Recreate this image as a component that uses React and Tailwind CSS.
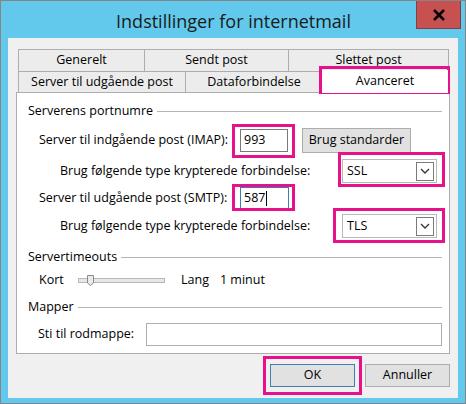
import { useState } from "react";

const PINK = "border-[#e8118c]";

function Mark({ inset, children, className = "" }) {
  // pink annotation frame drawn over an element
  return (
    <span className={`relative inline-flex ${className}`}>
      {children}
      <span
        className={`pointer-events-none absolute border-[3px] ${PINK}`}
        style={inset}
      />
    </span>
  );
}

function Heading({ children }) {
  return (
    <div className="flex items-center h-[20px] pl-[11px] pr-[7px]">
      <span className="pr-[4px]">{children}</span>
      <span className="flex-1 h-px bg-[#b4b4b4]" />
    </div>
  );
}

function Select({ value }) {
  return (
    <div className="flex items-center w-[95px] h-[24px] border border-[#b9b9b9] bg-white pl-[4px] pr-[2px]">
      <span className="flex-1">{value}</span>
      <span className="flex items-center justify-center w-[18px] h-[19px] border border-[#7a7a7a]">
        <svg width="10" height="6" viewBox="0 0 10 6">
          <path d="M1 1 L5 5 L9 1" fill="none" stroke="#333" strokeWidth="1.3" />
        </svg>
      </span>
    </div>
  );
}

export default function App() {
  const [path, setPath] = useState("");
  const tabs1 = [
    ["Generelt", "w-[127px]"],
    ["Sendt post", "w-[145px]"],
    ["Slettet post", "w-[161px]"],
  ];

  return (
    <div
      className="w-[466px] h-[404px] bg-[#62c9ec] border border-[#858585] flex flex-col text-[12.5px] text-black"
      style={{ fontFamily: '"Open Sans", "Noto Sans", sans-serif' }}
    >
      {/* title bar */}
      <div className="relative h-[37px] flex items-center justify-center">
        <span className="text-[18px] text-[#1a1a1a] pt-[4px] pl-[1px]">Indstillinger for internetmail</span>
        <button className="absolute right-[4px] top-0 w-[45px] h-[28px] bg-[#c75050] border border-[#7b4343] border-t-0 flex items-center justify-center">
          <svg width="14" height="12" viewBox="0 0 14 12">
            <path d="M2 1 L12 11 M12 1 L2 11" stroke="#000" strokeWidth="2.6" />
          </svg>
        </button>
      </div>

      {/* client area */}
      <div className="ml-[7px] mr-[7px] h-[360px] bg-[#f0f0f0] pt-[11px] pl-[8px] pr-[8px] flex flex-col">
        {/* tabs */}
        <div className="pl-[2px] flex flex-col">
          <div className="flex h-[22px]">
            {tabs1.map(([t, w], i) => (
              <div
                key={t}
                className={`${w} ${i ? "-ml-px" : ""} h-full border border-b-0 border-[#adadad] bg-[#ececec] flex items-center justify-center`}
              >
                {t}
              </div>
            ))}
          </div>
          <div className="flex h-[21px]">
            <div className="w-[168px] h-full border border-b-0 border-[#adadad] bg-[#ececec] flex items-center justify-center">
              Server til udgående post
            </div>
            <div className="-ml-px w-[138px] h-full border border-b-0 border-[#adadad] bg-[#ececec] flex items-center justify-center">
              Dataforbindelse
            </div>
            <Mark inset={{ left: -3, right: -2, top: -4, bottom: -2 }} className="-ml-[1px] -mt-[1px]">
              <div className="w-[126px] h-[23px] bg-white flex items-center justify-center z-10">
                Avanceret
              </div>
            </Mark>
          </div>
        </div>

        {/* panel */}
        <div className="h-[262px] border border-[#adadad] bg-white flex flex-col pt-[8px]">
          <Heading>Serverens portnumre</Heading>

          <div className="mt-[7px] flex items-center h-[24px] pl-[22px]">
            <span className="w-[201px]">Server til indgående post (IMAP):</span>
            <Mark inset={{ left: -8, right: -7, top: -5, bottom: -6 }}>
              <div className="w-[48px] h-[23px] border border-[#7a7a7a] bg-white flex items-center pl-[3px]">
                993
              </div>
            </Mark>
            <button className="ml-[14px] w-[109px] h-[25px] border border-[#adadad] bg-[#e1e1e1]">
              Brug standarder
            </button>
          </div>

          <div className="mt-[7px] flex items-center h-[24px] pl-[43px]">
            <span className="w-[282px]">Brug følgende type krypterede forbindelse:</span>
            <Mark inset={{ left: -4, right: -8, top: -7, bottom: -4 }}>
              <Select value="SSL" />
            </Mark>
          </div>

          <div className="mt-[3px] flex items-center h-[24px] pl-[22px]">
            <span className="w-[201px]">Server til udgående post (SMTP):</span>
            <Mark inset={{ left: -8, right: -6, top: -3, bottom: -2 }}>
              <div className="w-[49px] h-[22px] border border-[#3c7fb1] bg-white flex items-center pl-[3px]">
                587<span className="w-px h-[15px] bg-black ml-px" />
              </div>
            </Mark>
          </div>

          <div className="mt-[4px] flex items-center h-[24px] pl-[43px]">
            <span className="w-[282px]">Brug følgende type krypterede forbindelse:</span>
            <Mark inset={{ left: -9, right: -8, top: -6, bottom: -5 }}>
              <Select value="TLS" />
            </Mark>
          </div>

          <div className="mt-[9px]">
            <Heading>Servertimeouts</Heading>
          </div>

          <div className="mt-[3px] flex items-center h-[20px] pl-[22px]">
            <span className="w-[39px]">Kort</span>
            <div className="relative w-[87px] h-[5px] border border-[#b8b8b8] bg-[#e7e7e7]">
              <svg className="absolute left-[8px] -top-[4px]" width="7" height="11" viewBox="0 0 7 11">
                <path d="M0.5 0.5 H6.5 V8 L3.5 10.5 L0.5 8 Z" fill="#eaeaea" stroke="#8a8a8a" />
              </svg>
            </div>
            <span className="ml-[16px]">Lang</span>
            <span className="ml-[11px]">1 minut</span>
          </div>

          <div className="mt-[7px]">
            <Heading>Mapper</Heading>
          </div>

          <div className="mt-[6px] flex items-center h-[23px] pl-[21px] pr-[7px]">
            <span className="w-[108px]">Sti til rodmappe:</span>
            <input
              value={path}
              onChange={(e) => setPath(e.target.value)}
              className="flex-1 h-[23px] border border-[#abadb3] bg-white outline-none px-1"
            />
          </div>
        </div>

        {/* buttons */}
        <div className="mt-[10px] flex justify-end gap-[10px]">
          <Mark inset={{ left: -7, right: -7, top: -8, bottom: -8 }}>
            <button className="w-[85px] h-[23px] border border-[#3c7fb1] bg-[#e1e1e1]">OK</button>
          </Mark>
          <button className="w-[85px] h-[23px] border border-[#adadad] bg-[#e1e1e1]">Annuller</button>
        </div>
      </div>
    </div>
  );
}
